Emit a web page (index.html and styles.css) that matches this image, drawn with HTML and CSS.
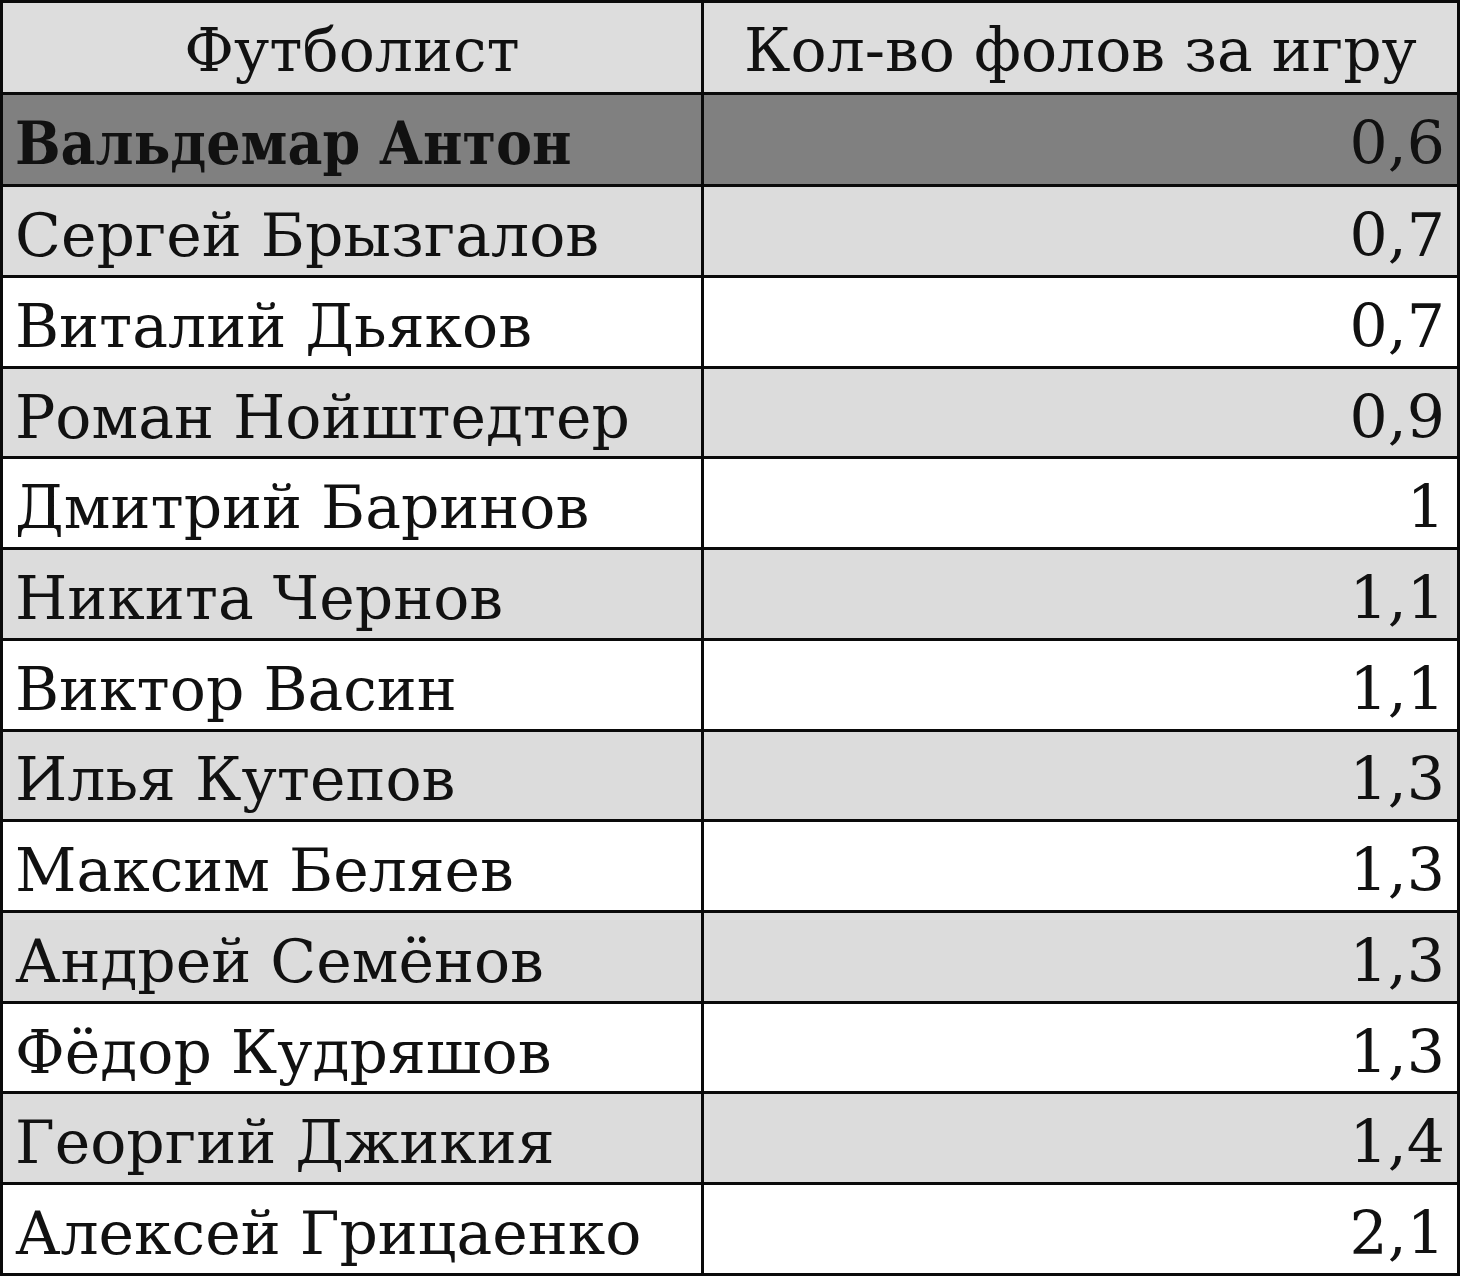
FILE: index.html
```html
<!DOCTYPE html>
<html lang="ru">
<head>
<meta charset="utf-8">
<title>Фолы</title>
<link rel="stylesheet" href="styles.css">
</head>
<body>
<table class="fouls">
  <thead>
    <tr class="head"><th>Футболист</th><th>Кол-во фолов за игру</th></tr>
  </thead>
  <tbody>
    <tr class="lead"><td class="name">Вальдемар Антон</td><td class="num">0,6</td></tr>
    <tr class="gray"><td class="name">Сергей Брызгалов</td><td class="num">0,7</td></tr>
    <tr class="white"><td class="name">Виталий Дьяков</td><td class="num">0,7</td></tr>
    <tr class="gray"><td class="name">Роман Нойштедтер</td><td class="num">0,9</td></tr>
    <tr class="white"><td class="name">Дмитрий Баринов</td><td class="num">1</td></tr>
    <tr class="gray"><td class="name">Никита Чернов</td><td class="num">1,1</td></tr>
    <tr class="white"><td class="name">Виктор Васин</td><td class="num">1,1</td></tr>
    <tr class="gray"><td class="name">Илья Кутепов</td><td class="num">1,3</td></tr>
    <tr class="white"><td class="name">Максим Беляев</td><td class="num">1,3</td></tr>
    <tr class="gray"><td class="name">Андрей Семёнов</td><td class="num">1,3</td></tr>
    <tr class="white"><td class="name">Фёдор Кудряшов</td><td class="num">1,3</td></tr>
    <tr class="gray"><td class="name">Георгий Джикия</td><td class="num">1,4</td></tr>
    <tr class="white"><td class="name">Алексей Грицаенко</td><td class="num">2,1</td></tr>
  </tbody>
</table>
</body>
</html>
```
FILE: styles.css
```css
html, body {
  margin: 0;
  padding: 0;
  background: #ffffff;
}
.fouls {
  width: 1460px;
  height: 1276px;
  border-collapse: collapse;
  table-layout: fixed;
  font-family: "DejaVu Serif", "Liberation Serif", serif;
  font-size: 60px;
  color: #111111;
}
.fouls th, .fouls td {
  border: 3px solid #0a0a0a;
  padding: 8px 12px 0 12px;
  height: 79.5px;
  line-height: 1;
  white-space: nowrap;
}
.fouls th {
  font-weight: normal;
  text-align: center;
  padding-top: 6px;
  height: 82.5px;
}
.fouls th:first-child, .fouls td:first-child {
  width: 674px;
}
.head { background: #dddddd; }
.lead { background: #808080; }
.lead td { height: 81.5px; }
.lead .name {
  font-weight: bold;
  font-stretch: condensed;
}
.gray { background: #dcdcdc; }
.white { background: #ffffff; }
.name { text-align: left; }
.num { text-align: right; }
```
